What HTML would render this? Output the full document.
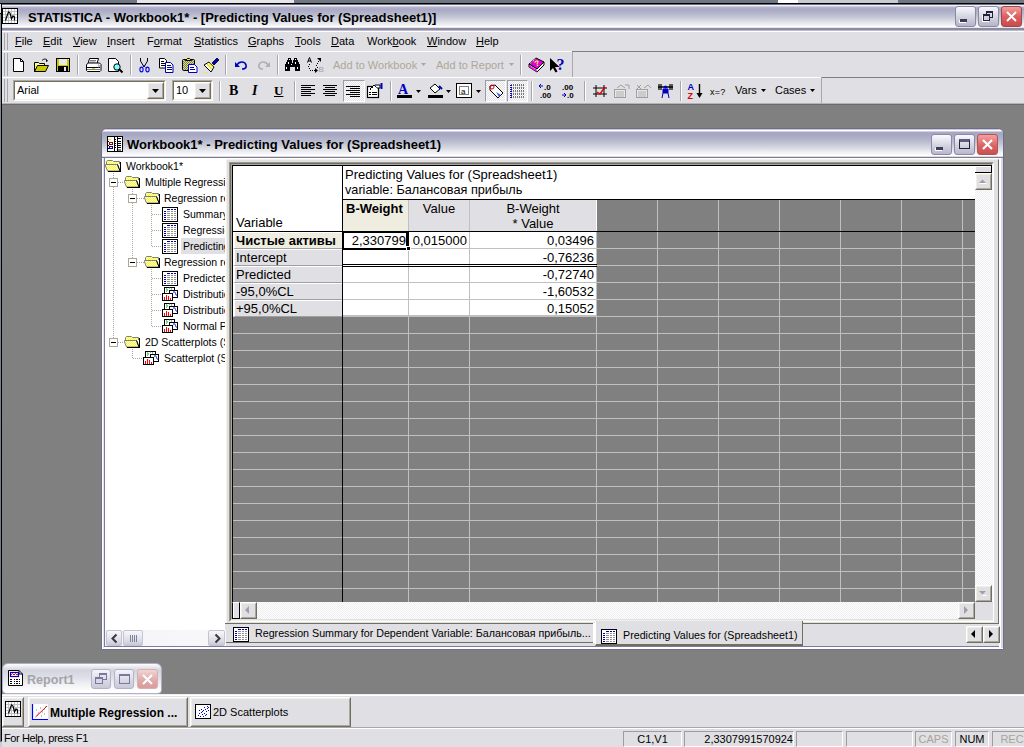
<!DOCTYPE html>
<html><head><meta charset="utf-8">
<style>
*{box-sizing:border-box}
html,body{margin:0;padding:0}
body{width:1024px;height:747px;overflow:hidden;position:relative;background:#808080;font-family:"Liberation Sans",sans-serif;font-size:11px;color:#000}
.a{position:absolute}
.t{position:absolute;white-space:nowrap;line-height:13px;font-size:11px}
.u{text-decoration:underline;text-underline-offset:1px}
svg{position:absolute;overflow:visible}
.face{background:#e0dfe3}
.sep{position:absolute;width:2px;border-left:1px solid #a7a6aa;border-right:1px solid #fff}
.sunk{position:absolute;border:1px solid;border-color:#aca899 #fff #fff #aca899}
.sunk>.in{position:absolute;left:0;top:0;right:0;bottom:0;border:1px solid;border-color:#716f64 #f1efe2 #f1efe2 #716f64;background:#fff}
.btn{position:absolute;border:1px solid;border-color:#fff #716f64 #716f64 #fff;background:#e0dfe3}
.btn>.in{position:absolute;left:0;top:0;right:0;bottom:0;border:1px solid;border-color:#f1efe2 #aca899 #aca899 #f1efe2}
</style></head><body>
<svg width="0" height="0" style="position:absolute"><defs><pattern id="chk" width="2" height="2" patternUnits="userSpaceOnUse"><rect width="2" height="2" fill="#fff"/><rect width="1" height="1" fill="#ffff00"/><rect x="1" y="1" width="1" height="1" fill="#ffff00"/></pattern><pattern id="chk2" width="2" height="2" patternUnits="userSpaceOnUse"><rect width="2" height="2" fill="#d8d8a0"/><rect width="1" height="1" fill="#808040"/><rect x="1" y="1" width="1" height="1" fill="#808040"/></pattern></defs></svg>
<!-- top strip -->
<div class="a" style="left:0;top:0;width:1024px;height:3px;background:#6f7782"></div>
<div class="a" style="left:137px;top:0;width:157px;height:3px;background:#e6e6ea"></div>
<div class="a" style="left:778px;top:0;width:120px;height:3px;background:#c8ccd4"></div>
<div class="a" style="left:778px;top:0;width:20px;height:3px;background:#fff"></div>
<div class="a" style="left:0;top:3px;width:1024px;height:1px;background:#000"></div>
<!-- main title bar -->
<div class="a" style="left:2px;top:4px;width:1022px;height:28px;background:linear-gradient(#6e6e80 0 1px,#f0f0f5 1px 2px,#cfcde0 2px 3px,#b4b2cc 3px 4px,#a8a8c4 5px,#b6b8cc 10px,#d4d6e0 16px,#f2f2f5 21px,#f6f6f8 22px,#fff 22px 23px,#e8e6e8 23px 24px,#8c8aa6 24px 26px,#bdbccb 26px 27px,#fff 27px 28px)"></div>
<div class="a" style="left:0;top:4px;width:1px;height:10px;background:#e4e4ea"></div><div class="a" style="left:0;top:14px;width:1px;height:728px;background:linear-gradient(#8890a0,#6c7484)"></div><div class="a" style="left:0;top:742px;width:2px;height:5px;background:#c8ccd4"></div>
<div class="a" style="left:1px;top:3px;width:1px;height:738px;background:#000"></div>
<div class="a" style="left:0;top:13px;width:1px;height:1px;background:#000"></div>
<!-- app icon -->
<svg style="left:2px;top:8px" width="16" height="16" viewBox="0 0 16 16">
<rect x="0.5" y="0.5" width="15" height="15" fill="#fff" stroke="#000"/>
<path d="M3.5 1v14M6.5 1v14M9.5 1v14M12.5 1v14M1 3.5h14M1 6.5h14M1 9.5h14M1 12.5h14" stroke="#c0c0c0" stroke-width="1"/>
<path d="M3.5 12.5 L5 8 L6.5 4 L8 5 L9.5 11 L11 8 L12.5 9 L12.5 12.5" fill="none" stroke="#000" stroke-width="1.2"/>
</svg>
<div class="t" style="left:28px;top:10px;font-size:13px;font-weight:bold;line-height:15px">STATISTICA - Workbook1* - [Predicting Values for (Spreadsheet1)]</div>
<!-- title buttons -->
<div class="a" style="left:955px;top:6px;width:21px;height:21px;border:1px solid #8a8aa4;border-radius:3px;background:linear-gradient(#f8f8fc,#c8c8d8 70%,#b4b4c8)"><div class="a" style="left:4px;top:12px;width:7px;height:3px;background:#3a3a58;box-shadow:-1px 1px #fff"></div></div>
<div class="a" style="left:978px;top:6px;width:21px;height:21px;border:1px solid #8a8aa4;border-radius:3px;background:linear-gradient(#f8f8fc,#c8c8d8 70%,#b4b4c8)"><div class="a" style="left:7px;top:4px;width:7px;height:7px;border:1px solid #22223a;border-top-width:2px"></div><div class="a" style="left:4px;top:7px;width:7px;height:7px;border:1px solid #22223a;border-top-width:2px;background:#d0d0de;box-shadow:-1px 1px #fff"></div></div>
<div class="a" style="left:1001px;top:6px;width:21px;height:21px;border:1px solid #a04848;border-radius:3px;background:linear-gradient(#f0a0a0,#dc6060 50%,#c84c4c)">
<svg style="left:3px;top:3px" width="13" height="13" viewBox="0 0 13 13"><path d="M2 2L11 11M11 2L2 11" stroke="#fff" stroke-width="1.9"/></svg></div>
<!-- menu bar -->
<div class="a face" style="left:2px;top:32px;width:1022px;height:19px"></div>
<div class="a" style="left:2px;top:51px;width:570px;height:1px;background:#fff"></div><div class="a" style="left:572px;top:52px;width:452px;height:1px;background:#a8a8ac"></div>
<div class="a" style="left:4px;top:33px;width:1px;height:17px;background:#a8a8ac"></div><div class="a" style="left:7px;top:33px;width:1px;height:17px;background:#a8a8ac"></div>
<div class="t" style="left:15px;top:35px"><span class="u">F</span>ile</div>
<div class="t" style="left:43px;top:35px"><span class="u">E</span>dit</div>
<div class="t" style="left:73px;top:35px"><span class="u">V</span>iew</div>
<div class="t" style="left:107px;top:35px"><span class="u">I</span>nsert</div>
<div class="t" style="left:147px;top:35px">F<span class="u">o</span>rmat</div>
<div class="t" style="left:194px;top:35px"><span class="u">S</span>tatistics</div>
<div class="t" style="left:248px;top:35px"><span class="u">G</span>raphs</div>
<div class="t" style="left:295px;top:35px"><span class="u">T</span>ools</div>
<div class="t" style="left:331px;top:35px"><span class="u">D</span>ata</div>
<div class="t" style="left:367px;top:35px">Work<span class="u">b</span>ook</div>
<div class="t" style="left:427px;top:35px"><span class="u">W</span>indow</div>
<div class="t" style="left:476px;top:35px"><span class="u">H</span>elp</div>

<!-- toolbars background -->
<div class="a face" style="left:2px;top:52px;width:1022px;height:25px"></div>
<div class="a" style="left:2px;top:77px;width:820px;height:1px;background:#fff"></div>
<div class="a face" style="left:2px;top:78px;width:1022px;height:25px"></div>
<div class="a" style="left:2px;top:103px;width:1022px;height:1px;background:#b4b4b8"></div>
<div class="a" style="left:2px;top:104px;width:1022px;height:1px;background:#6c6c6c"></div>

<div class="a" style="left:4px;top:53px;width:1px;height:23px;background:#a8a8ac"></div><div class="a" style="left:7px;top:53px;width:1px;height:23px;background:#a8a8ac"></div>
<div class="a" style="left:4px;top:79px;width:1px;height:23px;background:#a8a8ac"></div><div class="a" style="left:7px;top:79px;width:1px;height:23px;background:#a8a8ac"></div>
<!-- new -->
<svg style="left:12px;top:57px" width="16" height="16" viewBox="0 0 16 16"><path d="M1.5 1.5h7l3 3v10h-10z" fill="#fff" stroke="#000"/><path d="M8.5 1.5v3h3" fill="none" stroke="#000"/></svg>
<!-- open -->
<svg style="left:33px;top:57px" width="17" height="16" viewBox="0 0 17 16"><path d="M1.5 5.5h4l1 1h5v2h-6l-4 6z" fill="#ffff80" stroke="#000"/><path d="M1.5 14.5l3-6h11l-3 6z" fill="#c8c800" stroke="#000"/><path d="M9 3.5c2-2 4-2 5 0" fill="none" stroke="#000"/><path d="M13 2l2 2-2 1z" fill="#000"/></svg>
<!-- save -->
<svg style="left:55px;top:57px" width="16" height="16" viewBox="0 0 16 16"><rect x="1.5" y="1.5" width="13" height="13" fill="#c8c800" stroke="#000"/><rect x="4" y="2" width="8" height="6" fill="#e8e8e8"/><rect x="3" y="9" width="10" height="6" fill="#000"/><rect x="9" y="10" width="2" height="4" fill="#e8e8e8"/><path d="M13 2.5h1" stroke="#fff"/></svg>
<div class="sep" style="left:77px;top:55px;height:20px"></div>
<!-- print -->
<svg style="left:85px;top:57px" width="17" height="16" viewBox="0 0 17 16"><path d="M4.5 1.5h9l-1.5 5h-9z" fill="#fff" stroke="#000"/><path d="M5 3.5h6M4.5 5h6" stroke="#808080"/><path d="M1.5 7.5l2-1.5h11l1.5 1.5v6l-1 1h-12.5l-1-1z" fill="#fff" stroke="#000"/><path d="M2 10.5h13" stroke="#000"/><path d="M2 12.5h13" stroke="#808080"/><path d="M7 11.5h3" stroke="#e0d000" stroke-width="1"/><path d="M13 8h1M14 9h1M13 10h1" stroke="#808080"/></svg>
<!-- preview -->
<svg style="left:107px;top:57px" width="17" height="17" viewBox="0 0 17 17"><path d="M1.5 1.5h7l3 3v10h-10z" fill="#fff" stroke="#000"/><circle cx="10" cy="10" r="3.2" fill="#80ffff" stroke="#000"/><path d="M12 12l3.5 3.5" stroke="#000" stroke-width="2"/></svg>
<div class="sep" style="left:130px;top:55px;height:20px"></div>
<!-- cut -->
<svg style="left:137px;top:57px" width="16" height="16" viewBox="0 0 16 16"><path d="M3.5 1v3l3 5M10.5 1v3l-3 5M7 8v2" fill="none" stroke="#000"/><ellipse cx="4.5" cy="12.5" rx="1.6" ry="2.4" fill="none" stroke="#0000e0" stroke-width="1.1"/><ellipse cx="10.5" cy="12.5" rx="1.6" ry="2.4" fill="none" stroke="#0000e0" stroke-width="1.1"/><path d="M5.5 10.5l1.5-1.5 1.5 1.5" fill="none" stroke="#0000e0"/></svg>
<!-- copy -->
<svg style="left:158px;top:57px" width="17" height="16" viewBox="0 0 17 16"><path d="M1.5 1.5h5l2 2v7.5h-7z" fill="#fff" stroke="#000"/><path d="M3 4.5h3M3 6.5h4M3 8.5h4" stroke="#000"/><path d="M7.5 5.5h5l2.5 2.5v7.5h-7.5z" fill="#fff" stroke="#0000a0"/><path d="M9 8.5h4M9 10.5h5M9 12.5h5" stroke="#0000a0"/></svg>
<!-- paste -->
<svg style="left:181px;top:57px" width="17" height="16" viewBox="0 0 17 16"><rect x="1.5" y="2.5" width="12" height="11" rx="1" fill="url(#chk2)" stroke="#000"/><path d="M4.5 3.5l2-2h2l2 2z" fill="#ffff00" stroke="#000"/><path d="M7.5 7.5h6l2.5 2.5v5.5h-8.5z" fill="#fff" stroke="#0000c0"/><path d="M9 10.5h4M9 12.5h5" stroke="#0000c0"/></svg>
<!-- brush -->
<svg style="left:203px;top:57px" width="17" height="17" viewBox="0 0 17 17"><path d="M1 8l5-3 5 5-3 5z" fill="#fff" stroke="#000"/><path d="M4 7l5 5M6 6l4 4" stroke="#e0e000" stroke-width="1.2"/><path d="M9 6l5-5 2 2-5 5z" fill="#0000c0" stroke="#000" stroke-width=".8"/><path d="M1 15.5h4" stroke="#e8e800" stroke-dasharray="1 1"/></svg>
<div class="sep" style="left:225px;top:55px;height:20px"></div>
<!-- undo -->
<svg style="left:233px;top:57px" width="16" height="16" viewBox="0 0 16 16"><path d="M4 8c2-4 8-4 9 0s-3 4-4 4" fill="none" stroke="#0000c0" stroke-width="1.6"/><path d="M2 5v5h5z" fill="#0000c0"/></svg>
<!-- redo -->
<svg style="left:256px;top:57px" width="16" height="16" viewBox="0 0 16 16"><path d="M12 8c-2-4-8-4-9 0s3 4 4 4" fill="none" stroke="#b0b0b4" stroke-width="1.6"/><path d="M14 5v5h-5z" fill="#b0b0b4"/></svg>
<div class="sep" style="left:277px;top:55px;height:20px"></div>
<!-- binoculars -->
<svg style="left:284px;top:57px" width="17" height="16" viewBox="0 0 17 16"><rect x="4" y="1" width="3" height="2" fill="#000"/><rect x="3" y="3" width="5" height="4" fill="#000"/><rect x="1" y="7" width="5" height="7" fill="#000"/><rect x="10" y="1" width="3" height="2" fill="#000"/><rect x="9" y="3" width="5" height="4" fill="#000"/><rect x="11" y="7" width="5" height="7" fill="#000"/><rect x="6" y="6" width="5" height="4" fill="#000"/><rect x="2" y="5" width="2" height="2" fill="#000"/><rect x="13" y="5" width="2" height="2" fill="#000"/><rect x="5" y="2" width="1" height="1" fill="#fff"/><rect x="11" y="2" width="1" height="1" fill="#fff"/><rect x="4" y="5" width="1" height="2" fill="#fff"/><rect x="7" y="7" width="1" height="1" fill="#fff"/><rect x="11" y="5" width="1" height="2" fill="#fff"/><rect x="2" y="10" width="1" height="2" fill="#fff"/><rect x="13" y="10" width="1" height="2" fill="#fff"/></svg>
<!-- next -->
<svg style="left:305px;top:57px" width="18" height="17" viewBox="0 0 18 17"><path d="M2.5 5.5L4.5 0.5L6.5 5.5M3 4h3" fill="none" stroke="#000"/><rect x="4" y="7" width="1" height="1" fill="#000"/><rect x="3" y="9" width="1" height="1" fill="#000"/><rect x="4" y="11" width="1" height="1" fill="#000"/><rect x="5" y="13" width="1" height="1" fill="#000"/><rect x="7" y="13" width="1" height="1" fill="#000"/><rect x="9" y="13" width="1" height="1" fill="#000"/><rect x="12" y="10" width="1" height="1" fill="#000"/><rect x="11" y="8" width="1" height="1" fill="#000"/><rect x="12" y="6" width="1" height="1" fill="#000"/><rect x="13" y="4" width="1" height="1" fill="#000"/><path d="M10 11v5l3-2.5z" fill="#000"/><path d="M12 1h4v4z" fill="#000"/><text x="13.5" y="15" font-size="8" fill="#a0a0a0" font-family="Liberation Sans">B</text></svg>
<div class="t" style="left:333px;top:59px;color:#aca899">Add to Workbook</div>
<svg style="left:421px;top:63px" width="5" height="3"><path d="M0 0h5l-2.5 3z" fill="#aca899"/></svg>
<div class="t" style="left:436px;top:59px;color:#aca899">Add to Report</div>
<svg style="left:509px;top:63px" width="5" height="3"><path d="M0 0h5l-2.5 3z" fill="#aca899"/></svg>
<div class="sep" style="left:520px;top:55px;height:20px"></div>
<!-- book -->
<svg style="left:528px;top:57px" width="18" height="16" viewBox="0 0 18 16"><path d="M1 7l7-6 8 4-7 7z" fill="#e000e0" stroke="#000" stroke-width="1"/><path d="M1 7v3l8 5 7-7V5l-7 7z" fill="#fff" stroke="#000"/><path d="M1 8.5l8 5M1.5 10l7.5 4.5" stroke="#e000e0"/><path d="M2 6.5l6-5" stroke="#fff" stroke-dasharray="1 1"/><text x="6.5" y="9.5" font-size="8" font-weight="bold" fill="#ffff00" font-family="Liberation Sans" transform="rotate(-20 8 7)">?</text></svg>
<!-- help cursor -->
<svg style="left:549px;top:57px" width="18" height="16" viewBox="0 0 18 16"><path d="M1 1v13l3-3 2.5 4.5 2-1L6 10h4.5z" fill="#000"/><text x="7.5" y="13" font-size="16" font-weight="bold" fill="#0000c0" font-family="Liberation Serif">?</text></svg>
<div class="a" style="left:572px;top:52px;width:1px;height:25px;background:#a8a8ac"></div>

<div class="sunk" style="left:13px;top:80px;width:153px;height:21px"><div class="in"></div></div>
<div class="t" style="left:17px;top:84px;font-size:11px">Arial</div>
<div class="btn" style="left:147px;top:82px;width:17px;height:17px"><div class="in"></div><svg style="left:4px;top:6px" width="7" height="4"><path d="M0 0h7l-3.5 4z" fill="#000"/></svg></div>
<div class="sunk" style="left:172px;top:80px;width:41px;height:21px"><div class="in"></div></div>
<div class="t" style="left:176px;top:84px;font-size:11px">10</div>
<div class="btn" style="left:194px;top:82px;width:17px;height:17px"><div class="in"></div><svg style="left:4px;top:6px" width="7" height="4"><path d="M0 0h7l-3.5 4z" fill="#000"/></svg></div>
<div class="sep" style="left:219px;top:81px;height:20px"></div>
<div class="t" style="left:229px;top:84px;font-family:'Liberation Serif';font-weight:bold;font-size:14px">B</div>
<div class="t" style="left:252px;top:84px;font-family:'Liberation Serif';font-weight:bold;font-style:italic;font-size:14px">I</div>
<div class="t" style="left:274px;top:84px;font-family:'Liberation Serif';font-weight:bold;font-size:13px;text-decoration:underline">U</div>
<div class="sep" style="left:294px;top:81px;height:20px"></div>
<svg style="left:301px;top:85px" width="14" height="12"><path d="M0 .5h14M0 2.5h10M0 4.5h14M0 6.5h10M0 8.5h14M0 10.5h10" stroke="#000"/></svg>
<svg style="left:323px;top:85px" width="14" height="12"><path d="M0 .5h14M2 2.5h10M0 4.5h14M2 6.5h10M0 8.5h14M2 10.5h10" stroke="#000"/></svg>
<div class="a" style="left:343px;top:80px;width:22px;height:22px;border:1px solid;border-color:#9d9da1 #fff #fff #9d9da1;background:repeating-conic-gradient(#fff 0 25%,#e0dfe3 0 50%) 0 0/2px 2px"></div>
<svg style="left:346px;top:86px" width="14" height="12"><path d="M0 .5h14M4 2.5h10M0 4.5h14M4 6.5h10M0 8.5h14M4 10.5h10" stroke="#000"/></svg>
<svg style="left:367px;top:83px" width="17" height="16" viewBox="0 0 17 16"><rect x="0.5" y="3.5" width="11" height="11" fill="#fff" stroke="#000" stroke-width="1.2"/><path d="M2 9.5h2M5 9.5h5M2 11.5h2M5 11.5h5" stroke="#000"/><path d="M3 6l4-4 3 3" fill="#fff" stroke="#000"/><path d="M3 6l1 1M5 4l1 1" stroke="#000"/><path d="M8 2h5v3h-3" fill="#fff" stroke="#000"/><path d="M14.5 0v6" stroke="#0000c0" stroke-width="2"/></svg>
<div class="sep" style="left:390px;top:81px;height:20px"></div>
<svg style="left:397px;top:82px" width="16" height="17" viewBox="0 0 16 17"><text x="1" y="12" font-size="14" font-weight="bold" fill="#0000c0" font-family="Liberation Serif">A</text><rect x="0" y="13" width="15" height="3" fill="#000"/></svg>
<svg style="left:416px;top:90px" width="5" height="3"><path d="M0 0h5l-2.5 3z" fill="#000"/></svg>
<svg style="left:428px;top:82px" width="16" height="17" viewBox="0 0 16 17"><path d="M2 6l5-4 5 5-5 4z" fill="#fff" stroke="#000"/><path d="M11 4l3 3" stroke="#0000c0" stroke-width="2"/><rect x="0" y="13" width="15" height="3" fill="#000"/></svg>
<svg style="left:446px;top:90px" width="5" height="3"><path d="M0 0h5l-2.5 3z" fill="#000"/></svg>
<svg style="left:456px;top:83px" width="17" height="16" viewBox="0 0 17 16"><rect x="0.5" y="0.5" width="15" height="14" fill="#fff" stroke="#000"/><rect x="3.5" y="3.5" width="9" height="8" fill="none" stroke="#808080"/><text x="5" y="10.5" font-size="8" font-family="Liberation Sans">a</text></svg>
<svg style="left:476px;top:90px" width="5" height="3"><path d="M0 0h5l-2.5 3z" fill="#000"/></svg>
<div class="a" style="left:485px;top:80px;width:21px;height:22px;border:1px solid;border-color:#9d9da1 #fff #fff #9d9da1;background:repeating-conic-gradient(#fff 0 25%,#e0dfe3 0 50%) 0 0/2px 2px"></div>
<svg style="left:488px;top:83px" width="16" height="16" viewBox="0 0 16 16"><path d="M2 3l5-1 8 8-5 5-8-8z" fill="#fff" stroke="#000"/><path d="M8 9l5 3-2 2z" fill="#4060e0"/><circle cx="4" cy="4" r="2" fill="none" stroke="#e00000"/></svg>
<div class="a" style="left:507px;top:80px;width:21px;height:22px;border:1px solid;border-color:#9d9da1 #fff #fff #9d9da1;background:repeating-conic-gradient(#fff 0 25%,#e0dfe3 0 50%) 0 0/2px 2px"></div>
<svg style="left:510px;top:83px" width="16" height="16" viewBox="0 0 16 16"><path d="M1 2h14M1 5h14M1 8h14M1 11h14M1 14h14" stroke="#000" stroke-dasharray="1 1"/><path d="M1 2v13" stroke="#0000c0" stroke-width="2" stroke-dasharray="1 1"/></svg>
<div class="sep" style="left:531px;top:81px;height:20px"></div>
<svg style="left:539px;top:83px" width="17" height="16" viewBox="0 0 17 16"><path d="M0 3h4M2 1l-2 2 2 2" stroke="#0000c0" fill="none"/><text x="5" y="7" font-size="8" font-weight="bold" font-family="Liberation Sans">.0</text><text x="1" y="15" font-size="8" font-weight="bold" font-family="Liberation Sans">.00</text></svg>
<svg style="left:561px;top:83px" width="17" height="16" viewBox="0 0 17 16"><text x="1" y="7" font-size="8" font-weight="bold" font-family="Liberation Sans">.00</text><path d="M1 12h4M3 10l2 2-2 2" stroke="#0000c0" fill="none"/><text x="6" y="15" font-size="8" font-weight="bold" font-family="Liberation Sans">.0</text></svg>
<div class="sep" style="left:584px;top:81px;height:20px"></div>
<svg style="left:592px;top:83px" width="16" height="16" viewBox="0 0 16 16"><path d="M1 5h14M1 11h14M4 2v12M12 2v12" stroke="#000"/><path d="M5 9l3 2 5-7" fill="none" stroke="#e00000" stroke-width="1.4"/></svg>
<svg style="left:613px;top:83px" width="17" height="16" viewBox="0 0 17 16"><rect x="1.5" y="6.5" width="11" height="8" fill="#e8e8e8" stroke="#a0a0a0"/><path d="M4 5l4-3 4 3M12 2h4v4" fill="none" stroke="#a0a0a0"/><path d="M3 9h8M3 11h8M3 13h8" stroke="#b0b0b0"/></svg>
<svg style="left:635px;top:83px" width="17" height="16" viewBox="0 0 17 16"><rect x="1.5" y="6.5" width="11" height="8" fill="#e8e8e8" stroke="#a0a0a0"/><path d="M2 2l4 4M6 2L2 6M9 5l4-3 3 3" fill="none" stroke="#a0a0a0"/><path d="M3 9h8M3 11h8M3 13h8" stroke="#b0b0b0"/></svg>
<svg style="left:657px;top:83px" width="17" height="16" viewBox="0 0 17 16"><path d="M1 4h15" stroke="#000" stroke-width="1.5"/><path d="M2 1v6M4 1v6M13 1v6M15 1v6" stroke="#000" stroke-width="1.2"/><circle cx="8.5" cy="4" r="1.6" fill="#0000c0"/><path d="M6 6h5v4H6zM6 10l-1 5M11 10l1 5" fill="#0000c0" stroke="#0000c0"/></svg>
<div class="sep" style="left:680px;top:81px;height:20px"></div>
<svg style="left:687px;top:82px" width="17" height="17" viewBox="0 0 17 17"><text x="0.5" y="8" font-size="9" font-weight="bold" fill="#0000c0" font-family="Liberation Sans">A</text><text x="0.5" y="16.5" font-size="9" font-weight="bold" fill="#e00000" font-family="Liberation Sans">Z</text><path d="M12.5 2v12" stroke="#000" stroke-width="1.4"/><path d="M9.5 11l3 5 3-5z" fill="#000"/></svg>
<div class="t" style="left:710px;top:86px;font-size:9px;letter-spacing:0.3px">x=?</div>
<div class="t" style="left:735px;top:84px">Vars</div>
<svg style="left:761px;top:89px" width="5" height="3"><path d="M0 0h5l-2.5 3z" fill="#000"/></svg>
<div class="t" style="left:775px;top:84px">Cases</div>
<svg style="left:810px;top:89px" width="5" height="3"><path d="M0 0h5l-2.5 3z" fill="#000"/></svg>
<div class="a" style="left:821px;top:77px;width:1px;height:26px;background:#a8a8ac"></div>

<div class="a" style="left:101px;top:128px;width:903px;height:522px;border:1px solid #6e6e8c;border-radius:6px 6px 0 0;background:#e0dfe3"></div>
<div class="a" style="left:102px;top:129px;width:901px;height:29px;border-radius:5px 5px 0 0;background:linear-gradient(#c8c8d8 0 1px,#fff 1px 2px,#d0d0e0 2px 3px,#a8a8c4 3px 4px,#a6a6c2 5px,#b4b6cc 11px,#d2d4de 18px,#f4f4f6 24px,#fafafc 26px,#fff 26px 27px,#dcdce4 27px 28px,#7c7a98 28px 29px)"></div>
<div class="a" style="left:102px;top:158px;width:2px;height:491px;background:#fff"></div>
<div class="a" style="left:103px;top:158px;width:1px;height:490px;background:#e4e4ec"></div>
<div class="a" style="left:104px;top:158px;width:1px;height:489px;background:#7c7c98"></div>
<div class="a" style="left:999px;top:158px;width:2px;height:491px;background:#fff"></div>
<div class="a" style="left:1001px;top:158px;width:2px;height:491px;background:#d8d8e4"></div>
<div class="a" style="left:102px;top:648px;width:901px;height:1px;background:#fff"></div>
<div class="a" style="left:104px;top:646px;width:895px;height:1px;background:#7c7c98"></div>
<div class="a" style="left:104px;top:647px;width:895px;height:1px;background:#fff"></div>
<!-- wb icon -->
<svg style="left:107px;top:136px" width="16" height="16" viewBox="0 0 16 16">
<rect x="0" y="0" width="16" height="16" fill="#000"/>
<rect x="1" y="1" width="6" height="14" fill="#fff"/>
<rect x="8" y="1" width="2" height="14" fill="#fff"/>
<rect x="11" y="1" width="4" height="14" fill="#fff"/>
<path d="M1 3.5h3" stroke="#e8e800"/>
<rect x="2.5" y="6.5" width="3" height="2" fill="none" stroke="#a00000"/>
<rect x="2.5" y="10.5" width="3" height="2" fill="none" stroke="#0000a0"/>
<path d="M1 5.5h1M1 9.5h1M1 12.5h1" stroke="#000"/>
<path d="M8 3.5h1M8 5.5h1M8 7.5h1M8 9.5h1M8 11.5h1M11 2.5h3M11 5.5h3M11 7.5h3M11 9.5h3M11 11.5h3M11 14h3" stroke="#000"/>
</svg>
<div class="t" style="left:127px;top:137px;font-size:13px;font-weight:bold;line-height:15px">Workbook1* - Predicting Values for (Spreadsheet1)</div>
<div class="a" style="left:931px;top:134px;width:21px;height:21px;border:1px solid #8a8aa8;border-radius:3px;background:linear-gradient(#fafafe,#d0d0de 60%,#b8b8cc)"><div class="a" style="left:4px;top:12px;width:7px;height:3px;background:#3c3c5c;box-shadow:-1px 1px #fff"></div></div>
<div class="a" style="left:954px;top:134px;width:21px;height:21px;border:1px solid #8a8aa8;border-radius:3px;background:linear-gradient(#fafafe,#d0d0de 60%,#b8b8cc)"><div class="a" style="left:4px;top:4px;width:11px;height:10px;border:1px solid #22223a;border-top-width:3px;border-top-color:#5c5c7c"></div></div>
<div class="a" style="left:977px;top:134px;width:21px;height:21px;border:1px solid #b05454;border-radius:3px;background:linear-gradient(#f4a0a0,#dc6464 55%,#cc5050)">
<svg style="left:3px;top:3px" width="13" height="13" viewBox="0 0 13 13"><path d="M2 2L11 11M11 2L2 11" stroke="#fff" stroke-width="2.2"/></svg></div>
<!-- tree panel -->
<div class="a" style="left:105px;top:158px;width:121px;height:472px;background:#fff;overflow:hidden" id="tree"></div>
<div class="a" style="left:0;top:0;width:225px;height:630px;overflow:hidden"><div class="a" style="left:113px;top:173px;width:1px;height:165px;background:repeating-linear-gradient(#aca899 0 1px,transparent 1px 2px)"></div><div class="a" style="left:118px;top:182px;width:6px;height:1px;background:repeating-linear-gradient(90deg,#aca899 0 1px,transparent 1px 2px)"></div><div class="a" style="left:118px;top:342px;width:6px;height:1px;background:repeating-linear-gradient(90deg,#aca899 0 1px,transparent 1px 2px)"></div><div class="a" style="left:132px;top:189px;width:1px;height:69px;background:repeating-linear-gradient(#aca899 0 1px,transparent 1px 2px)"></div><div class="a" style="left:137px;top:198px;width:7px;height:1px;background:repeating-linear-gradient(90deg,#aca899 0 1px,transparent 1px 2px)"></div><div class="a" style="left:137px;top:262px;width:7px;height:1px;background:repeating-linear-gradient(90deg,#aca899 0 1px,transparent 1px 2px)"></div><div class="a" style="left:151px;top:205px;width:1px;height:42px;background:repeating-linear-gradient(#aca899 0 1px,transparent 1px 2px)"></div><div class="a" style="left:152px;top:214px;width:10px;height:1px;background:repeating-linear-gradient(90deg,#aca899 0 1px,transparent 1px 2px)"></div><div class="a" style="left:152px;top:230px;width:10px;height:1px;background:repeating-linear-gradient(90deg,#aca899 0 1px,transparent 1px 2px)"></div><div class="a" style="left:152px;top:246px;width:10px;height:1px;background:repeating-linear-gradient(90deg,#aca899 0 1px,transparent 1px 2px)"></div><div class="a" style="left:151px;top:269px;width:1px;height:58px;background:repeating-linear-gradient(#aca899 0 1px,transparent 1px 2px)"></div><div class="a" style="left:152px;top:278px;width:10px;height:1px;background:repeating-linear-gradient(90deg,#aca899 0 1px,transparent 1px 2px)"></div><div class="a" style="left:152px;top:294px;width:10px;height:1px;background:repeating-linear-gradient(90deg,#aca899 0 1px,transparent 1px 2px)"></div><div class="a" style="left:152px;top:310px;width:10px;height:1px;background:repeating-linear-gradient(90deg,#aca899 0 1px,transparent 1px 2px)"></div><div class="a" style="left:152px;top:326px;width:10px;height:1px;background:repeating-linear-gradient(90deg,#aca899 0 1px,transparent 1px 2px)"></div><div class="a" style="left:132px;top:349px;width:1px;height:10px;background:repeating-linear-gradient(#aca899 0 1px,transparent 1px 2px)"></div><div class="a" style="left:133px;top:358px;width:10px;height:1px;background:repeating-linear-gradient(90deg,#aca899 0 1px,transparent 1px 2px)"></div><div class="a" style="left:181px;top:238px;width:45px;height:16px;background:#e0dfe3"></div><svg style="left:105px;top:159px" width="17" height="13" viewBox="0 0 17 13"><path d="M1.5 5V2.5l1-1h5l1 1h6V5" fill="url(#chk)" stroke="#808080"/><path d="M0.5 5.5h12l2.5 6.5H2.5l-2-5z" fill="url(#chk)" stroke="#808080"/><path d="M12.5 5.5l2.5 6.5M15.5 3v9.5M3 12.5h13" stroke="#000"/></svg><div class="a" style="left:109px;top:178px;width:9px;height:9px;border:1px solid #aca899;background:#fff"></div><div class="a" style="left:111px;top:182px;width:5px;height:1px;background:#000"></div><svg style="left:124px;top:175px" width="17" height="13" viewBox="0 0 17 13"><path d="M1.5 5V2.5l1-1h5l1 1h6V5" fill="url(#chk)" stroke="#808080"/><path d="M0.5 5.5h12l2.5 6.5H2.5l-2-5z" fill="url(#chk)" stroke="#808080"/><path d="M12.5 5.5l2.5 6.5M15.5 3v9.5M3 12.5h13" stroke="#000"/></svg><div class="a" style="left:128px;top:194px;width:9px;height:9px;border:1px solid #aca899;background:#fff"></div><div class="a" style="left:130px;top:198px;width:5px;height:1px;background:#000"></div><svg style="left:144px;top:191px" width="17" height="13" viewBox="0 0 17 13"><path d="M1.5 5V2.5l1-1h5l1 1h6V5" fill="url(#chk)" stroke="#808080"/><path d="M0.5 5.5h12l2.5 6.5H2.5l-2-5z" fill="url(#chk)" stroke="#808080"/><path d="M12.5 5.5l2.5 6.5M15.5 3v9.5M3 12.5h13" stroke="#000"/></svg><svg style="left:162px;top:207px" width="16" height="15" viewBox="0 0 16 15"><rect x="0.5" y="0.5" width="15" height="14" fill="#fff" stroke="#000"/><path d="M5 2.5h3M9 2.5h2M12 2.5h2" stroke="#0000a0"/><path d="M2 4.5h2M2 6.5h2M2 8.5h2M2 10.5h2M2 12.5h2" stroke="#0000a0"/><path d="M5 4.5h3M9 4.5h2M12 4.5h2M5 6.5h3M9 6.5h2M12 6.5h2M5 8.5h3M9 8.5h2M12 8.5h2M5 10.5h3M9 10.5h2M12 10.5h2M5 12.5h3M9 12.5h2M12 12.5h2" stroke="#909090"/></svg><svg style="left:162px;top:223px" width="16" height="15" viewBox="0 0 16 15"><rect x="0.5" y="0.5" width="15" height="14" fill="#fff" stroke="#000"/><path d="M5 2.5h3M9 2.5h2M12 2.5h2" stroke="#0000a0"/><path d="M2 4.5h2M2 6.5h2M2 8.5h2M2 10.5h2M2 12.5h2" stroke="#0000a0"/><path d="M5 4.5h3M9 4.5h2M12 4.5h2M5 6.5h3M9 6.5h2M12 6.5h2M5 8.5h3M9 8.5h2M12 8.5h2M5 10.5h3M9 10.5h2M12 10.5h2M5 12.5h3M9 12.5h2M12 12.5h2" stroke="#909090"/></svg><svg style="left:162px;top:239px" width="16" height="15" viewBox="0 0 16 15"><rect x="0.5" y="0.5" width="15" height="14" fill="#fff" stroke="#000"/><path d="M5 2.5h3M9 2.5h2M12 2.5h2" stroke="#0000a0"/><path d="M2 4.5h2M2 6.5h2M2 8.5h2M2 10.5h2M2 12.5h2" stroke="#0000a0"/><path d="M5 4.5h3M9 4.5h2M12 4.5h2M5 6.5h3M9 6.5h2M12 6.5h2M5 8.5h3M9 8.5h2M12 8.5h2M5 10.5h3M9 10.5h2M12 10.5h2M5 12.5h3M9 12.5h2M12 12.5h2" stroke="#909090"/></svg><svg style="left:162px;top:271px" width="16" height="15" viewBox="0 0 16 15"><rect x="0.5" y="0.5" width="15" height="14" fill="#fff" stroke="#000"/><path d="M5 2.5h3M9 2.5h2M12 2.5h2" stroke="#0000a0"/><path d="M2 4.5h2M2 6.5h2M2 8.5h2M2 10.5h2M2 12.5h2" stroke="#0000a0"/><path d="M5 4.5h3M9 4.5h2M12 4.5h2M5 6.5h3M9 6.5h2M12 6.5h2M5 8.5h3M9 8.5h2M12 8.5h2M5 10.5h3M9 10.5h2M12 10.5h2M5 12.5h3M9 12.5h2M12 12.5h2" stroke="#909090"/></svg><div class="a" style="left:128px;top:258px;width:9px;height:9px;border:1px solid #aca899;background:#fff"></div><div class="a" style="left:130px;top:262px;width:5px;height:1px;background:#000"></div><svg style="left:144px;top:255px" width="17" height="13" viewBox="0 0 17 13"><path d="M1.5 5V2.5l1-1h5l1 1h6V5" fill="url(#chk)" stroke="#808080"/><path d="M0.5 5.5h12l2.5 6.5H2.5l-2-5z" fill="url(#chk)" stroke="#808080"/><path d="M12.5 5.5l2.5 6.5M15.5 3v9.5M3 12.5h13" stroke="#000"/></svg><svg style="left:162px;top:287px" width="16" height="14" viewBox="0 0 16 14"><rect x="2.5" y="0.5" width="10" height="6" fill="#fff" stroke="#000"/><path d="M4 2h1M5 3h1M4 4h1M7 1h1M9 2h1" stroke="#00a000"/><rect x="7.5" y="3.5" width="8" height="7" fill="#fff" stroke="#000"/><path d="M11 5h2M13 6h1M13 7h1M14 8h1" stroke="#0000ff"/><rect x="0.5" y="6.5" width="10" height="7" fill="#fff" stroke="#000"/><path d="M2.5 13v-3M4.5 13v-5M6.5 13v-4M8.5 13v-2" stroke="#ff0000"/></svg><svg style="left:162px;top:303px" width="16" height="14" viewBox="0 0 16 14"><rect x="2.5" y="0.5" width="10" height="6" fill="#fff" stroke="#000"/><path d="M4 2h1M5 3h1M4 4h1M7 1h1M9 2h1" stroke="#00a000"/><rect x="7.5" y="3.5" width="8" height="7" fill="#fff" stroke="#000"/><path d="M11 5h2M13 6h1M13 7h1M14 8h1" stroke="#0000ff"/><rect x="0.5" y="6.5" width="10" height="7" fill="#fff" stroke="#000"/><path d="M2.5 13v-3M4.5 13v-5M6.5 13v-4M8.5 13v-2" stroke="#ff0000"/></svg><svg style="left:162px;top:319px" width="16" height="14" viewBox="0 0 16 14"><rect x="2.5" y="0.5" width="10" height="6" fill="#fff" stroke="#000"/><path d="M4 2h1M5 3h1M4 4h1M7 1h1M9 2h1" stroke="#00a000"/><rect x="7.5" y="3.5" width="8" height="7" fill="#fff" stroke="#000"/><path d="M11 5h2M13 6h1M13 7h1M14 8h1" stroke="#0000ff"/><rect x="0.5" y="6.5" width="10" height="7" fill="#fff" stroke="#000"/><path d="M2.5 13v-3M4.5 13v-5M6.5 13v-4M8.5 13v-2" stroke="#ff0000"/></svg><div class="a" style="left:109px;top:338px;width:9px;height:9px;border:1px solid #aca899;background:#fff"></div><div class="a" style="left:111px;top:342px;width:5px;height:1px;background:#000"></div><svg style="left:124px;top:335px" width="17" height="13" viewBox="0 0 17 13"><path d="M1.5 5V2.5l1-1h5l1 1h6V5" fill="url(#chk)" stroke="#808080"/><path d="M0.5 5.5h12l2.5 6.5H2.5l-2-5z" fill="url(#chk)" stroke="#808080"/><path d="M12.5 5.5l2.5 6.5M15.5 3v9.5M3 12.5h13" stroke="#000"/></svg><svg style="left:143px;top:351px" width="16" height="14" viewBox="0 0 16 14"><rect x="2.5" y="0.5" width="10" height="6" fill="#fff" stroke="#000"/><path d="M4 2h1M5 3h1M4 4h1M7 1h1M9 2h1" stroke="#00a000"/><rect x="7.5" y="3.5" width="8" height="7" fill="#fff" stroke="#000"/><path d="M11 5h2M13 6h1M13 7h1M14 8h1" stroke="#0000ff"/><rect x="0.5" y="6.5" width="10" height="7" fill="#fff" stroke="#000"/><path d="M2.5 13v-3M4.5 13v-5M6.5 13v-4M8.5 13v-2" stroke="#ff0000"/></svg><div class="t" style="left:126px;top:160px;font-size:10.5px">Workbook1*</div><div class="t" style="left:145px;top:176px;font-size:10.5px">Multiple Regression results</div><div class="t" style="left:164px;top:192px;font-size:10.5px">Regression results</div><div class="t" style="left:183px;top:208px;font-size:10.5px">Summary</div><div class="t" style="left:183px;top:224px;font-size:10.5px">Regression</div><div class="t" style="left:183px;top:240px;font-size:10.5px">Predicting</div><div class="t" style="left:164px;top:256px;font-size:10.5px">Regression results</div><div class="t" style="left:183px;top:272px;font-size:10.5px">Predicted</div><div class="t" style="left:183px;top:288px;font-size:10.5px">Distribution</div><div class="t" style="left:183px;top:304px;font-size:10.5px">Distribution</div><div class="t" style="left:183px;top:320px;font-size:10.5px">Normal Prob</div><div class="t" style="left:145px;top:336px;font-size:10.5px">2D Scatterplots (Sp</div><div class="t" style="left:164px;top:352px;font-size:10.5px">Scatterplot (Sp</div></div>
<div class="a" style="left:225px;top:158px;width:774px;height:466px;background:#fff"></div><div class="a" style="left:226px;top:159px;width:773px;height:465px;border-top:1px solid #f4f2e6;border-left:1px solid #f4f2e6;border-right:1px solid #716f64;background:#e0dfe3"></div>
<div class="a" style="left:229px;top:162px;width:765px;height:460px;border-top:1px solid #9d9a8a;border-left:1px solid #9d9a8a;border-right:1px solid #fff;border-bottom:1px solid #fff"></div>
<div class="a" style="left:230px;top:163px;width:763px;height:458px;border-top:1px solid #716f64;border-left:1px solid #716f64;border-right:1px solid #f1efe2;border-bottom:1px solid #f1efe2"></div>
<div class="a" style="left:231px;top:164px;width:761px;height:456px;background:#a8a8a8"></div>
<div class="a" style="left:225px;top:623px;width:774px;height:1px;background:#716f64"></div>
<div class="a" style="left:232px;top:165px;width:760px;height:454px;background:#000"></div>
<div class="a" style="left:233px;top:166px;width:742px;height:436px;background:#808080"></div>
<div class="a" style="left:233px;top:232px;width:742px;height:370px;background:repeating-linear-gradient(#808080 0 16px,#c0c0c0 16px 17px)"></div>
<div class="a" style="left:597px;top:166px;width:378px;height:436px;background:repeating-linear-gradient(90deg,transparent 0 60px,#c0c0c0 60px 61px)"></div>
<div class="a" style="left:408px;top:200px;width:1px;height:402px;background:#c0c0c0"></div>
<div class="a" style="left:469px;top:200px;width:1px;height:402px;background:#c0c0c0"></div>
<div class="a" style="left:596px;top:200px;width:1px;height:402px;background:#c0c0c0"></div>
<div class="a" style="left:342px;top:165px;width:1px;height:437px;background:#000"></div>
<div class="a" style="left:233px;top:166px;width:109px;height:65px;background:#fff"></div>
<div class="a" style="left:343px;top:166px;width:632px;height:33px;background:#fff"></div>
<div class="a" style="left:342px;top:199px;width:633px;height:1px;background:#000"></div>
<div class="a" style="left:233px;top:231px;width:742px;height:1px;background:#000"></div>
<div class="a" style="left:343px;top:200px;width:65px;height:31px;background:#efede0"></div>
<div class="a" style="left:409px;top:200px;width:60px;height:31px;background:#e0dfe3"></div>
<div class="a" style="left:470px;top:200px;width:126px;height:31px;background:#e0dfe3"></div>
<div class="a" style="left:596px;top:200px;width:1px;height:31px;background:#fff"></div>
<div class="a" style="left:343px;top:232px;width:253px;height:84px;background:#fff"></div>
<div class="a" style="left:343px;top:248px;width:254px;height:1px;background:#c0c0c0"></div>
<div class="a" style="left:343px;top:282px;width:254px;height:1px;background:#c0c0c0"></div>
<div class="a" style="left:343px;top:299px;width:254px;height:1px;background:#c0c0c0"></div>
<div class="a" style="left:343px;top:315px;width:254px;height:1px;background:#c0c0c0"></div>
<div class="a" style="left:408px;top:232px;width:1px;height:84px;background:#c0c0c0"></div>
<div class="a" style="left:469px;top:232px;width:1px;height:84px;background:#c0c0c0"></div>
<div class="a" style="left:342px;top:264px;width:255px;height:1px;background:#000"></div>
<div class="a" style="left:342px;top:266px;width:255px;height:1px;background:#000"></div>
<div class="a" style="left:233px;top:232px;width:109px;height:17px;background:#efede0;border-top:1px solid #fff;border-left:2px solid #fff;border-bottom:1px solid #a0a0a0"></div>
<div class="a" style="left:233px;top:249px;width:109px;height:17px;background:#e0dfe3;border-top:1px solid #fff;border-left:2px solid #fff;border-bottom:1px solid #a0a0a0"></div>
<div class="a" style="left:233px;top:266px;width:109px;height:17px;background:#e0dfe3;border-top:1px solid #fff;border-left:2px solid #fff;border-bottom:1px solid #a0a0a0"></div>
<div class="a" style="left:233px;top:283px;width:109px;height:17px;background:#e0dfe3;border-top:1px solid #fff;border-left:2px solid #fff;border-bottom:1px solid #a0a0a0"></div>
<div class="a" style="left:233px;top:300px;width:109px;height:17px;background:#e0dfe3;border-top:1px solid #fff;border-left:2px solid #fff;border-bottom:1px solid #a0a0a0"></div>
<div class="t" style="left:236px;top:215px;font-size:13px;line-height:15px;">Variable</div>
<div class="t" style="left:345px;top:167px;font-size:13px;line-height:15px;">Predicting Values for (Spreadsheet1)</div>
<div class="t" style="left:345px;top:183px;font-size:13px;line-height:15px;font-size:12.7px">variable: Балансовая прибыль</div>
<div class="t" style="left:346px;top:201px;font-size:13px;line-height:15px;font-weight:bold">B-Weight</div>
<div class="t" style="left:409px;top:201px;font-size:13px;line-height:15px;width:60px;text-align:center">Value</div>
<div class="t" style="left:470px;top:201px;font-size:13px;line-height:15px;width:126px;text-align:center">B-Weight</div>
<div class="t" style="left:470px;top:216px;font-size:13px;line-height:15px;width:126px;text-align:center">* Value</div>
<div class="t" style="left:236px;top:233px;font-size:13px;line-height:15px;font-weight:bold">Чистые активы</div>
<div class="t" style="left:236px;top:250px;font-size:13px;line-height:15px;">Intercept</div>
<div class="t" style="left:236px;top:267px;font-size:13px;line-height:15px;">Predicted</div>
<div class="t" style="left:236px;top:284px;font-size:13px;line-height:15px;">-95,0%CL</div>
<div class="t" style="left:236px;top:301px;font-size:13px;line-height:15px;">+95,0%CL</div>
<div class="t" style="left:470px;top:233px;font-size:13px;line-height:15px;width:124px;text-align:right">0,03496</div>
<div class="t" style="left:470px;top:250px;font-size:13px;line-height:15px;width:124px;text-align:right">-0,76236</div>
<div class="t" style="left:470px;top:267px;font-size:13px;line-height:15px;width:124px;text-align:right">-0,72740</div>
<div class="t" style="left:470px;top:284px;font-size:13px;line-height:15px;width:124px;text-align:right">-1,60532</div>
<div class="t" style="left:470px;top:301px;font-size:13px;line-height:15px;width:124px;text-align:right">0,15052</div>
<div class="t" style="left:343px;top:233px;font-size:13px;line-height:15px;width:63px;text-align:right">2,330799</div>
<div class="t" style="left:409px;top:233px;font-size:13px;line-height:15px;width:58px;text-align:right">0,015000</div>
<div class="a" style="left:343px;top:232px;width:66px;height:18px;border:1px solid #000;border-right-width:3px;border-bottom-width:2px"></div>
<div class="a" style="left:406px;top:246px;width:5px;height:5px;background:#000;border:1px solid #fff"></div>
<div class="a" style="left:975px;top:166px;width:18px;height:436px;background:repeating-conic-gradient(#fff 0 25%,#eeedf0 0 50%) 0 0/2px 2px"></div>
<div class="a" style="left:975px;top:166px;width:16px;height:6px;background:#e0dfe3;border-top:1px solid #fff;border-left:1px solid #fff"></div>
<div class="a" style="left:975px;top:172px;width:17px;height:1px;background:#000"></div>
<div class="a" style="left:991px;top:165px;width:1px;height:8px;background:#000"></div>
<div class="btn" style="left:975px;top:173px;width:17px;height:17px"><div class="in"></div><svg style="left:3px;top:5px" width="7" height="5"><path d="M0 4h7L3.5 0.5z" fill="#a0a0a4"/><path d="M0.5 4.5h7" stroke="#fff"/></svg></div>
<div class="btn" style="left:975px;top:585px;width:17px;height:17px"><div class="in"></div><svg style="left:3px;top:5px" width="7" height="5"><path d="M0 0h7L3.5 3.5z" fill="#a0a0a4"/><path d="M3.5 4.5h4" stroke="#fff"/></svg></div>
<div class="a" style="left:232px;top:602px;width:743px;height:17px;background:repeating-conic-gradient(#fff 0 25%,#eeedf0 0 50%) 0 0/2px 2px"></div>
<div class="a" style="left:232px;top:602px;width:8px;height:17px;background:#e0dfe3;border:1px solid #000;border-top:1px solid #fff;box-shadow:inset 1px 0 #fff"></div>
<div class="btn" style="left:240px;top:602px;width:17px;height:17px"><div class="in"></div><svg style="left:4px;top:3px" width="5" height="8"><path d="M4 0v8L0 4z" fill="#a0a0a4"/></svg></div>
<div class="btn" style="left:958px;top:602px;width:17px;height:17px"><div class="in"></div><svg style="left:5px;top:3px" width="5" height="8"><path d="M0 0v8L4 4z" fill="#a0a0a4"/></svg></div>
<div class="a" style="left:975px;top:602px;width:18px;height:18px;background:#e0dfe3"></div>
<div class="a" style="left:231px;top:619px;width:762px;height:1px;background:#e0dfe3"></div>
<div class="a" style="left:225px;top:624px;width:774px;height:22px;background:#e0dfe3"></div>
<div class="a" style="left:225px;top:623px;width:368px;height:20px;border-top:1px solid #716f64;border-bottom:1px solid #716f64"></div>
<div class="a" style="left:593px;top:623px;width:2px;height:20px;background:#fff"></div>
<div class="a" style="left:595px;top:621px;width:208px;height:25px;background:#e0dfe3;border-right:1px solid #716f64;border-bottom:2px solid #716f64;border-left:1px solid #fff"></div>
<div class="a" style="left:803px;top:623px;width:196px;height:1px;background:#716f64"></div>
<svg style="left:233px;top:627px" width="16" height="15" viewBox="0 0 16 15"><rect x="0.5" y="0.5" width="15" height="14" fill="#fff" stroke="#000"/><path d="M5 2.5h3M9 2.5h2M12 2.5h2" stroke="#0000a0"/><path d="M2 4.5h2M2 6.5h2M2 8.5h2M2 10.5h2M2 12.5h2" stroke="#0000a0"/><path d="M5 4.5h3M9 4.5h2M12 4.5h2M5 6.5h3M9 6.5h2M12 6.5h2M5 8.5h3M9 8.5h2M12 8.5h2M5 10.5h3M9 10.5h2M12 10.5h2M5 12.5h3M9 12.5h2M12 12.5h2" stroke="#909090"/></svg>
<div class="t" style="left:255px;top:627px;font-size:10.7px;line-height:13px">Regression Summary for Dependent Variable: Балансовая прибыль...</div>
<svg style="left:601px;top:629px" width="16" height="15" viewBox="0 0 16 15"><rect x="0.5" y="0.5" width="15" height="14" fill="#fff" stroke="#000"/><path d="M5 2.5h3M9 2.5h2M12 2.5h2" stroke="#0000a0"/><path d="M2 4.5h2M2 6.5h2M2 8.5h2M2 10.5h2M2 12.5h2" stroke="#0000a0"/><path d="M5 4.5h3M9 4.5h2M12 4.5h2M5 6.5h3M9 6.5h2M12 6.5h2M5 8.5h3M9 8.5h2M12 8.5h2M5 10.5h3M9 10.5h2M12 10.5h2M5 12.5h3M9 12.5h2M12 12.5h2" stroke="#909090"/></svg>
<div class="t" style="left:623px;top:629px;font-size:10.7px;line-height:13px">Predicting Values for (Spreadsheet1)</div>
<div class="btn" style="left:966px;top:626px;width:17px;height:17px"><div class="in"></div><svg style="left:4px;top:3px" width="5" height="8"><path d="M4 0v8L0 4z" fill="#000"/></svg></div>
<div class="btn" style="left:983px;top:626px;width:17px;height:17px"><div class="in"></div><svg style="left:5px;top:3px" width="5" height="8"><path d="M0 0v8L4 4z" fill="#000"/></svg></div>
<div class="a" style="left:105px;top:630px;width:121px;height:16px;background:linear-gradient(90deg,#f4f4f8,#f8f8fb);"></div>
<div class="a" style="left:106px;top:630px;width:16px;height:16px;border:1px solid #c4c4d4;border-radius:2px;background:linear-gradient(#f8f8fa,#dcdce6 70%,#c8c8d8)"><svg style="left:4px;top:3px" width="7" height="9"><path d="M5.5 0.5L1.5 4.5L5.5 8.5" fill="none" stroke="#3a3a3a" stroke-width="2"/></svg></div>
<div class="a" style="left:123px;top:630px;width:20px;height:16px;border:1px solid #c4c4d4;border-radius:2px;background:linear-gradient(#f8f8fa,#dcdce6 70%,#c8c8d8)"><div class="a" style="left:6px;top:4px;width:7px;height:7px;background:repeating-linear-gradient(90deg,#8080a0 0 1px,transparent 1px 2px)"></div></div>
<div class="a" style="left:208px;top:630px;width:17px;height:16px;border:1px solid #c4c4d4;border-radius:2px;background:linear-gradient(#f8f8fa,#dcdce6 70%,#c8c8d8)"><svg style="left:5px;top:3px" width="7" height="9"><path d="M1.5 0.5L5.5 4.5L1.5 8.5" fill="none" stroke="#3a3a3a" stroke-width="2"/></svg></div>
<div class="a" style="left:2px;top:663px;width:160px;height:31px;border:1px solid #b0b0c4;border-radius:6px 6px 4px 4px;background:linear-gradient(#fdfdfe 0,#f0f0f4 2px,#d4d4e0 6px,#e0e0ea 14px,#f4f4f8 22px,#fff 27px)"></div>
<svg style="left:8px;top:670px" width="15" height="16" viewBox="0 0 15 16"><path d="M0.5 0.5h10.5l3.5 3.5v11.5h-14z" fill="#fff" stroke="#000"/><path d="M11 0.5v3.5h3.5" fill="none" stroke="#000"/><rect x="2.5" y="2.5" width="8" height="4" fill="#fff" stroke="#0000c0" stroke-width="1.2"/><path d="M3 5l1.5-1.5 1.5 1.5 1.5-1.5 1.5 1.5 1-1" fill="none" stroke="#ff0000"/><path d="M2 9.5h2M6 9.5h1M8 9.5h2M11 9.5h1M2 11.5h2M6 11.5h1M8 11.5h2M11 11.5h1M2 13.5h2M6 13.5h1M8 13.5h2M11 13.5h1" stroke="#000"/></svg>
<div class="t" style="left:27px;top:673px;font-size:12.6px;line-height:15px;font-weight:bold;color:#a4a4a8">Report1</div>
<div class="a" style="left:91px;top:669px;width:20px;height:20px;border:1px solid #b4b4c8;border-radius:3px;background:linear-gradient(#f4f4f8,#d8d8e4 60%,#c8c8d8)"><div class="a" style="left:7px;top:3px;width:8px;height:7px;border:1px solid #7878a0;border-top-width:2px"></div><div class="a" style="left:3px;top:7px;width:8px;height:7px;border:1px solid #7878a0;border-top-width:2px;background:#d8d8e4"></div></div>
<div class="a" style="left:114px;top:669px;width:20px;height:20px;border:1px solid #b4b4c8;border-radius:3px;background:linear-gradient(#f4f4f8,#d8d8e4 60%,#c8c8d8)"><div class="a" style="left:4px;top:4px;width:11px;height:10px;border:1px solid #7878a0;border-top-width:2px"></div></div>
<div class="a" style="left:137px;top:669px;width:21px;height:20px;border:1px solid #d8b0b0;border-radius:3px;background:linear-gradient(#f0d4d4,#e0a8a8 60%,#d89c9c)"><svg style="left:3px;top:3px" width="13" height="13" viewBox="0 0 13 13"><path d="M2 2L11 11M11 2L2 11" stroke="#fff" stroke-width="2"/></svg></div>
<div class="a" style="left:2px;top:694px;width:1022px;height:1px;background:#f0f0f4"></div>
<div class="a face" style="left:2px;top:695px;width:1022px;height:32px;border-top:1px solid #fff"></div>
<div class="a" style="left:2px;top:697px;width:22px;height:30px;border:1px solid;border-color:#fff #716f64 #716f64 #fff;background:#e0dfe3"><div class="a" style="left:0;top:0;right:0;bottom:0;border:1px solid;border-color:#f1efe2 #aca899 #aca899 #f1efe2"></div></div>
<svg style="left:5px;top:701px" width="16" height="16" viewBox="0 0 16 16"><rect x="0.5" y="0.5" width="15" height="15" fill="#fff" stroke="#000"/><path d="M3.5 1v14M6.5 1v14M9.5 1v14M12.5 1v14M1 3.5h14M1 6.5h14M1 9.5h14M1 12.5h14" stroke="#c0c0c0"/><path d="M3.5 12.5L5 8 6.5 4 8 5 9.5 11 11 8 12.5 9 12.5 12.5" fill="none" stroke="#000" stroke-width="1.2"/></svg>
<div class="a" style="left:28px;top:697px;width:160px;height:30px;border:1px solid;border-color:#fff #716f64 #716f64 #fff;background:#e0dfe3"><div class="a" style="left:0;top:0;right:0;bottom:0;border:1px solid;border-color:#f1efe2 #aca899 #aca899 #f1efe2"></div></div>
<svg style="left:32px;top:704px" width="16" height="16" viewBox="0 0 16 16"><rect x="1" y="0" width="15" height="15" fill="#fff"/><path d="M0.5 0v15.5H16" fill="none" stroke="#0000ff" stroke-width="1.2"/><path d="M3.5 13L15 2" stroke="#ff0000"/><path d="M4 6h.8M6 9h.8M8 4h.8M10 8h.8M12 5h.8M5 11h.8M9 12h.8M12 10h.8M13 3h.8" stroke="#606060"/></svg>
<div class="t" style="left:50px;top:706px;font-size:12px;line-height:15px;font-weight:bold">Multiple Regression ...</div>
<div class="a" style="left:190px;top:697px;width:161px;height:30px;border:1px solid;border-color:#fff #716f64 #716f64 #fff;background:#e0dfe3"><div class="a" style="left:0;top:0;right:0;bottom:0;border:1px solid;border-color:#f1efe2 #aca899 #aca899 #f1efe2"></div></div>
<svg style="left:195px;top:704px" width="16" height="16" viewBox="0 0 16 16"><rect x="0.5" y="0.5" width="15" height="14" fill="#fff" stroke="#000"/><rect x="3" y="11" width="1" height="1" fill="#0000e0"/><rect x="4" y="9" width="1" height="1" fill="#0000e0"/><rect x="5" y="12" width="1" height="1" fill="#0000e0"/><rect x="6" y="8" width="1" height="1" fill="#0000e0"/><rect x="7" y="10" width="1" height="1" fill="#0000e0"/><rect x="8" y="6" width="1" height="1" fill="#0000e0"/><rect x="9" y="9" width="1" height="1" fill="#0000e0"/><rect x="10" y="5" width="1" height="1" fill="#0000e0"/><rect x="11" y="7" width="1" height="1" fill="#0000e0"/><rect x="12" y="4" width="1" height="1" fill="#0000e0"/><rect x="13" y="6" width="1" height="1" fill="#0000e0"/><rect x="6" y="5" width="1" height="1" fill="#0000e0"/><rect x="10" y="11" width="1" height="1" fill="#0000e0"/><rect x="12" y="2" width="1" height="1" fill="#0000e0"/><rect x="4" y="6" width="1" height="1" fill="#0000e0"/><rect x="8" y="12" width="1" height="1" fill="#0000e0"/><rect x="11" y="10" width="1" height="1" fill="#0000e0"/><rect x="13" y="3" width="1" height="1" fill="#0000e0"/><rect x="9" y="3" width="1" height="1" fill="#0000e0"/><rect x="7" y="7" width="1" height="1" fill="#0000e0"/></svg>
<div class="t" style="left:213px;top:706px;font-size:11px;line-height:13px">2D Scatterplots</div>
<div class="a" style="left:2px;top:727px;width:1022px;height:1px;background:#a8a8ac"></div>
<div class="a face" style="left:2px;top:728px;width:1022px;height:19px;border-top:1px solid #fff"></div>
<div class="t" style="left:4px;top:732px;font-size:11px;line-height:13px;letter-spacing:-0.4px">For Help, press F1</div>
<div class="a" style="left:623px;top:731px;width:59px;height:16px;border:1px solid;border-color:#9d9da1 #fff #fff #9d9da1"><div class="t" style="left:0px;top:1px;width:57px;text-align:center;color:#000;font-size:11px;line-height:13px">C1,V1</div></div>
<div class="a" style="left:684px;top:731px;width:110px;height:16px;border:1px solid;border-color:#9d9da1 #fff #fff #9d9da1"><div class="t" style="left:2px;top:1px;width:106px;text-align:right;color:#000;font-size:11px;line-height:13px">2,3307991570924</div></div>
<div class="a" style="left:796px;top:731px;width:47px;height:16px;border:1px solid;border-color:#9d9da1 #fff #fff #9d9da1"><div class="t" style="left:0px;top:1px;width:45px;text-align:center;color:#000;font-size:11px;line-height:13px"></div></div>
<div class="a" style="left:846px;top:731px;width:67px;height:16px;border:1px solid;border-color:#9d9da1 #fff #fff #9d9da1"><div class="t" style="left:0px;top:1px;width:65px;text-align:center;color:#000;font-size:11px;line-height:13px"></div></div>
<div class="a" style="left:915px;top:731px;width:37px;height:16px;border:1px solid;border-color:#9d9da1 #fff #fff #9d9da1"><div class="t" style="left:0px;top:1px;width:35px;text-align:center;color:#a8a498;font-size:11px;line-height:13px">CAPS</div></div>
<div class="a" style="left:955px;top:731px;width:34px;height:16px;border:1px solid;border-color:#9d9da1 #fff #fff #9d9da1"><div class="t" style="left:0px;top:1px;width:32px;text-align:center;color:#000;font-size:11px;line-height:13px">NUM</div></div>
<div class="a" style="left:992px;top:731px;width:40px;height:16px;border:1px solid;border-color:#9d9da1 #fff #fff #9d9da1"><div class="t" style="left:0px;top:1px;width:38px;text-align:center;color:#a8a498;font-size:11px;line-height:13px">REC</div></div>
</body></html>
